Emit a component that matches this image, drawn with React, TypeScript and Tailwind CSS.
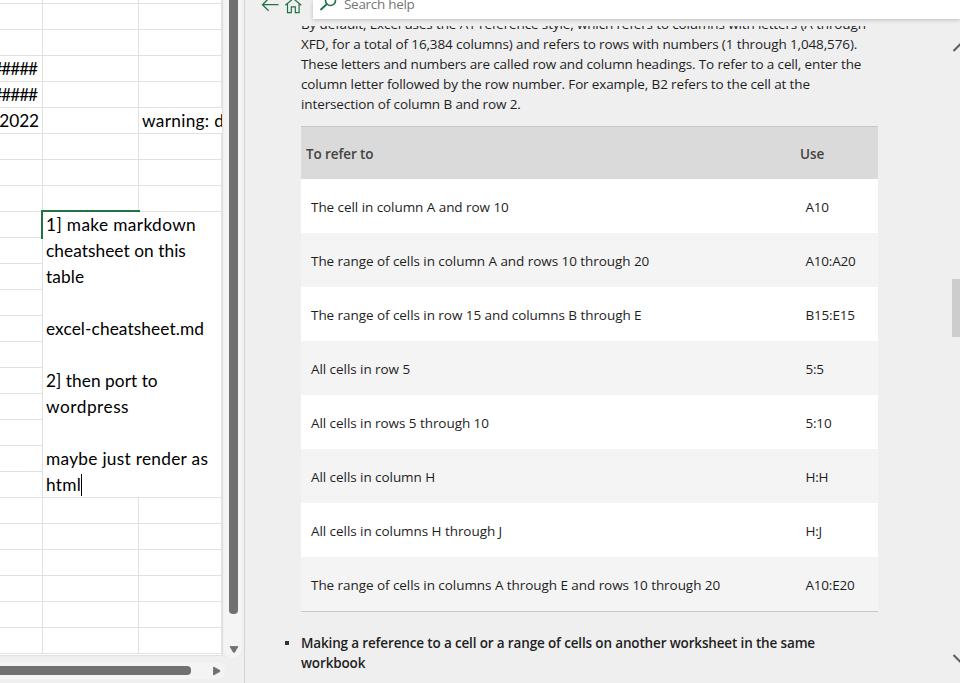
import React from "react";

const ROWS = Array.from({ length: 26 }, (_, i) => i);

const LEFT_TEXT: Record<number, string> = { 3: "#####", 4: "#####", 5: "2022" };

const NOTE_LINES = [
  { text: "1] make markdown", cls: "tracking-[0.36px]" },
  { text: "cheatsheet on this", cls: "tracking-[0.05px]" },
  { text: "table", cls: "tracking-[0.1px]" },
  { text: "", cls: "" },
  { text: "excel-cheatsheet.md", cls: "tracking-[0.1px]" },
  { text: "", cls: "" },
  { text: "2] then port to", cls: "tracking-[0.04px]" },
  { text: "wordpress", cls: "tracking-[0.5px]" },
  { text: "", cls: "" },
  { text: "maybe just render as", cls: "tracking-[0.28px]" },
  { text: "html", cls: "tracking-[0.3px]" },
];

const PARAGRAPH = [
  { text: "By default, Excel uses the A1 reference style, which refers to columns with letters (A through", cls: "tracking-[-0.135px]" },
  { text: "XFD, for a total of 16,384 columns) and refers to rows with numbers (1 through 1,048,576).", cls: "tracking-[-0.115px]" },
  { text: "These letters and numbers are called row and column headings. To refer to a cell, enter the", cls: "tracking-[-0.14px]" },
  { text: "column letter followed by the row number. For example, B2 refers to the cell at the", cls: "tracking-[-0.135px]" },
  { text: "intersection of column B and row 2.", cls: "tracking-[-0.11px]" },
];

const REFS = [
  ["The cell in column A and row 10", "A10"],
  ["The range of cells in column A and rows 10 through 20", "A10:A20"],
  ["The range of cells in row 15 and columns B through E", "B15:E15"],
  ["All cells in row 5", "5:5"],
  ["All cells in rows 5 through 10", "5:10"],
  ["All cells in column H", "H:H"],
  ["All cells in columns H through J", "H:J"],
  ["The range of cells in columns A through E and rows 10 through 20", "A10:E20"],
];

function CellEditor() {
  return (
    <div className="absolute left-[43px] top-[212px] h-[285px] w-[178px] bg-white pl-[3px]">
      <div className="absolute -left-[2px] -top-[2px] h-[2px] w-[99px] bg-[#217346]" />
      <div className="absolute -left-[2px] -top-[2px] h-[29px] w-[2px] bg-[#217346]" />
      {NOTE_LINES.map((l, i) => (
        <div key={i} className={`flex h-[26px] items-center whitespace-pre ${l.cls}`}>
          <span>{l.text}</span>
          {i === NOTE_LINES.length - 1 && <span className="h-[22px] w-px bg-black" />}
        </div>
      ))}
    </div>
  );
}

function Sheet() {
  return (
    <div className="relative h-[656px] w-[223px] overflow-hidden border-b border-r border-[#e1e1e1] bg-white font-['Lato','Liberation_Sans',sans-serif] text-[17.3px] text-black">
      {ROWS.map((r) => (
        <div
          key={r}
          className={`flex border-b border-[#e1e1e1] leading-[25px] ${r === 0 ? "h-[4px]" : "h-[26px]"}`}
        >
          <div
            className={`flex w-[43px] shrink-0 justify-end overflow-hidden border-r border-[#e1e1e1] whitespace-nowrap ${r === 5 ? "pr-[3px] tracking-[-0.1px]" : "pr-[5px] tracking-[-1.1px]"}`}
          >
            {LEFT_TEXT[r]}
          </div>
          <div className="w-[96px] shrink-0 border-r border-[#e1e1e1]" />
          <div
            className={`w-[83px] shrink-0 overflow-hidden pl-[3px] whitespace-nowrap tracking-[0.3px] ${r === 5 ? "" : "border-r border-[#e1e1e1]"}`}
          >
            {r === 5 && "warning: d"}
          </div>
        </div>
      ))}
      <CellEditor />
    </div>
  );
}

function SheetPane() {
  return (
    <div className="flex h-full w-[245px] shrink-0 flex-col border-r border-[#d4d4d4] bg-[#efefef]">
      <div className="flex h-[659px]">
        <Sheet />
        <div className="ml-[1px] flex h-[658px] w-[18px] flex-col rounded-b-[9px] bg-[#f4f4f4] pl-[5px]">
          <div className="h-[614px] w-[9px] rounded-b-[4px] bg-[#707070]" />
          <svg className="mt-[32px] -ml-[0.5px]" width="10" height="7" viewBox="0 0 10 7">
            <path d="M1 .5h8L5.6 6.3h-1.200Z" fill="#707070" stroke="#707070" strokeWidth=".8" strokeLinejoin="round" />
          </svg>
        </div>
      </div>
      <div className="mt-[3px] flex h-[17px] w-[225px] items-center rounded-r-[8px] bg-[#f4f4f4]">
        <div className="h-[9px] w-[191px] rounded-r-[4px] bg-[#707070]" />
        <svg className="ml-[22px]" width="8" height="10" viewBox="0 0 8 10">
          <path d="M.5 1v8L6.800 5.600v-1.200Z" fill="#707070" stroke="#707070" strokeWidth=".8" strokeLinejoin="round" />
        </svg>
      </div>
    </div>
  );
}

function HelpHeader() {
  return (
    <div className="flex h-[19px] shrink-0">
      <svg className="h-[19px] w-[68px] shrink-0" viewBox="0 0 68 19" fill="none" stroke="#217346">
        <path d="M33.500 4.700H17.700M23.600 -1.500L17.500 4.700l6.100 6" strokeWidth="1.300" />
        <path d="M40.300 5.300L48.300 -1.500l8 6.800M42.500 4v8.700h3.800V6.800h4v5.900h3.800V4" strokeWidth="1.200" />
      </svg>
      <div className="flex h-[19px] flex-1 bg-white shadow-[0_1px_4px_rgba(0,0,0,0.22)]">
        <svg className="h-[19px] w-[31px] shrink-0" viewBox="0 0 31 19" fill="none" stroke="#217346">
          <circle cx="17.500" cy="0.500" r="5" strokeWidth="1.600" />
          <path d="M13.800 4L7.500 10" strokeWidth="1.800" />
        </svg>
        <div className="-mt-[6px] h-[20px] text-[13.5px] leading-[21px] tracking-[-0.3px] text-[#767676]">Search help</div>
      </div>
    </div>
  );
}

function HelpPane() {
  return (
    <div className="flex h-full min-w-0 flex-1 flex-col bg-[#efefef] font-['Open_Sans','Noto_Sans',sans-serif] text-[13.5px] text-[#1e1e1e]">
      <HelpHeader />
      <div className="mt-[7px] flex min-h-0 flex-1 overflow-hidden">
        <div className="-mt-[12px] w-[633px] shrink-0 pl-[56px]">
          {PARAGRAPH.map((l) => (
            <div key={l.text} className={`h-[20px] leading-[20px] whitespace-nowrap ${l.cls}`}>
              {l.text}
            </div>
          ))}
          <div className="mt-[12px] border-y border-[#c8c8c8]">
            <div className="flex h-[52px] items-center bg-[#dadada] pt-[2px] pl-[5px] font-semibold tracking-[-0.1px] text-[#444]">
              <div className="w-[494px]">To refer to</div>
              <div>Use</div>
            </div>
            {REFS.map(([a, b], i) => (
              <div
                key={a}
                className={`flex h-[54px] items-center pt-[2px] pl-[10px] whitespace-nowrap ${i % 2 ? "bg-[#f4f4f4]" : "bg-white"}`}
              >
                <div className="w-[494.5px] tracking-[-0.06px]">{a}</div>
                <div className="tracking-[-0.2px]">{b}</div>
              </div>
            ))}
          </div>
          <div className="mt-[21px] -ml-[16px] flex font-semibold leading-[21px] tracking-[-0.15px]">
            <div className="mt-[8px] mr-[12px] h-[4px] w-[4px] bg-[#333]" />
            <div className="whitespace-nowrap">
              <div className="h-[20px]">Making a reference to a cell or a range of cells on another worksheet in the same</div>
              <div>workbook</div>
            </div>
          </div>
        </div>
        <div className="ml-auto flex w-[8px] flex-col">
          <svg className="mt-[14px]" width="8" height="14" viewBox="0 0 8 14" fill="none" stroke="#606060" strokeWidth="2.200">
            <path d="M1.500 11L10 2.500" />
          </svg>
          <div className="mt-[225px] h-[58px] bg-[#cdcdcd]" />
          <svg className="mt-[315px]" width="8" height="14" viewBox="0 0 8 14" fill="none" stroke="#606060" strokeWidth="2.200">
            <path d="M1.500 3L10 11.500" />
          </svg>
        </div>
      </div>
    </div>
  );
}

export default function App() {
  return (
    <div className="flex h-[683px] w-[960px] overflow-hidden">
      <SheetPane />
      <HelpPane />
    </div>
  );
}
